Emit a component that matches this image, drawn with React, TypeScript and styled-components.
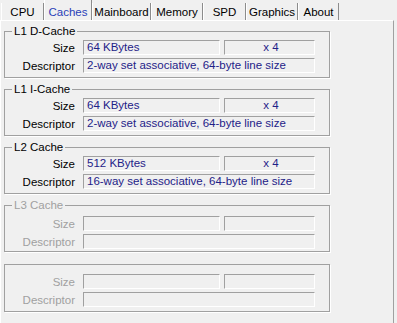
import React from "react";
import styled, { createGlobalStyle } from "styled-components";

interface ICacheRow {
  title: string;
  size: string;
  count: string;
  descriptor: string;
  disabled?: boolean;
}

const caches: ICacheRow[] = [
  { title: "L1 D-Cache", size: "64 KBytes", count: "x 4", descriptor: "2-way set associative, 64-byte line size" },
  { title: "L1 I-Cache", size: "64 KBytes", count: "x 4", descriptor: "2-way set associative, 64-byte line size" },
  { title: "L2 Cache", size: "512 KBytes", count: "x 4", descriptor: "16-way set associative, 64-byte line size" },
  { title: "L3 Cache", size: "", count: "", descriptor: "", disabled: true },
  { title: "", size: "", count: "", descriptor: "", disabled: true },
];

const tabs = ["CPU", "Caches", "Mainboard", "Memory", "SPD", "Graphics", "About"];
const tabWidths = [43, 48, 59, 52, 43, 52, 41];

const GlobalStyle = createGlobalStyle`
  html, body {
    margin: 0;
    padding: 0;
    background: #f0f0f0;
  }
  body {
    font-family: "Liberation Sans", Arial, sans-serif;
    font-size: 11px;
    color: #000;
  }
`;

const StyledWindow = styled.div`
  width: 397px;
  height: 323px;
  overflow: hidden;
  background: #f0f0f0;
`;

const StyledTabBar = styled.div`
  display: flex;
  height: 20px;
  padding-left: 1px;
  align-items: flex-end;
`;

const StyledTab = styled.div<{ $active?: boolean; $w: number }>`
  box-sizing: border-box;
  width: ${p => p.$w}px;
  height: ${p => (p.$active ? 20 : 17)}px;
  display: flex;
  align-items: center;
  justify-content: center;
  padding-top: ${p => (p.$active ? 3 : 0)}px;
  border-left: 1px solid #fff;
  border-right: 1px solid #8c8c8c;
  color: ${p => (p.$active ? "#2a3fb8" : "#000")};
  font-size: 11.5px;
`;

const StyledPanel = styled.div`
  box-sizing: border-box;
  width: 394px;
  height: 310px;
  border-top: 1px solid #fff;
  border-left: 1px solid #fff;
  border-right: 1px solid #a0a0a0;
  padding: 4px 0 0 3px;
  display: flex;
  flex-direction: column;
  gap: 5px;
`;

const StyledGroup = styled.fieldset<{ $untitled?: boolean; $disabled?: boolean }>`
  box-sizing: border-box;
  width: 326px;
  height: ${p => (p.$untitled ? 48 : 53)}px;
  margin: ${p => (p.$untitled ? "7px 0 0" : "0")};
  padding: ${p => (p.$untitled ? "9px" : p.$disabled ? "4px" : "2px")} 13px 2px 0;
  border: 1px solid #a0a0a0;
  box-shadow: 1px 1px 0 #fff;
  display: flex;
  flex-direction: column;
  gap: 3px;
`;

const StyledLegend = styled.legend<{ $disabled?: boolean }>`
  margin-left: 7px;
  padding: 0 2px;
  line-height: 13px;
  height: 13px;
  font-size: 11.5px;
  color: ${p => (p.$disabled ? "#a0a0a0" : "#000")};
`;

const StyledRow = styled.div`
  display: flex;
  align-items: center;
  height: 15px;
`;

const StyledLabel = styled.div<{ $disabled?: boolean }>`
  width: 70px;
  margin-right: 8px;
  text-align: right;
  font-size: 11.5px;
  color: ${p => (p.$disabled ? "#a0a0a0" : "#000")};
`;

const StyledField = styled.div<{ $w: number; $center?: boolean }>`
  box-sizing: border-box;
  width: ${p => p.$w}px;
  height: 15px;
  line-height: 13px;
  padding-left: 3px;
  border-top: 1px solid #a0a0a0;
  border-left: 1px solid #a0a0a0;
  border-bottom: 1px solid #fff;
  border-right: 1px solid #fff;
  color: #1e2288;
  font-size: 11.5px;
  white-space: nowrap;
  overflow: hidden;
  text-align: ${p => (p.$center ? "center" : "left")};
`;

const StyledGap = styled.div`
  width: 4px;
`;

class App extends React.Component {
  render() {
    return (
      <StyledWindow>
        <GlobalStyle />
        <StyledTabBar>
          {tabs.map((t, i) =>
            <StyledTab key={t} $w={tabWidths[i]} $active={t === "Caches"}>{t}</StyledTab>
          )}
        </StyledTabBar>
        <StyledPanel>
          {caches.map((c, i) =>
            <StyledGroup key={i} $untitled={!c.title} $disabled={c.disabled}>
              {c.title && <StyledLegend $disabled={c.disabled}>{c.title}</StyledLegend>}
              <StyledRow>
                <StyledLabel $disabled={c.disabled}>Size</StyledLabel>
                <StyledField $w={137}>{c.size}</StyledField>
                <StyledGap />
                <StyledField $w={91} $center>{c.count}</StyledField>
              </StyledRow>
              <StyledRow>
                <StyledLabel $disabled={c.disabled}>Descriptor</StyledLabel>
                <StyledField $w={232}>{c.descriptor}</StyledField>
              </StyledRow>
            </StyledGroup>
          )}
        </StyledPanel>
      </StyledWindow>
    );
  }
}

export default App;
